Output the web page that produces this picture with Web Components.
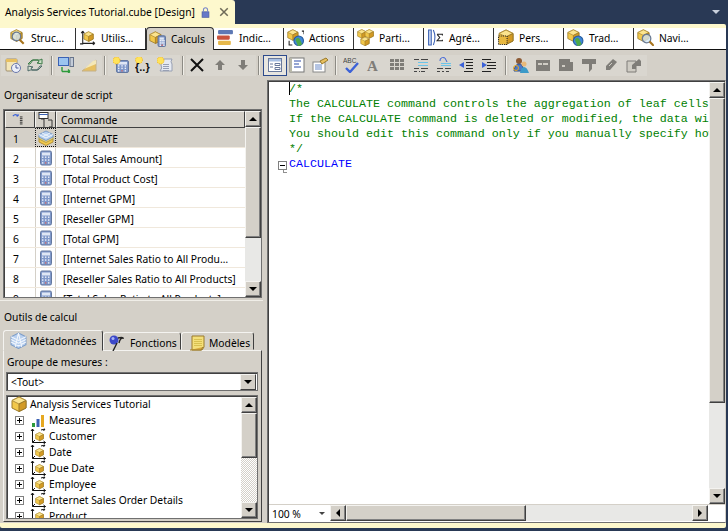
<!DOCTYPE html>
<html>
<head>
<meta charset="utf-8">
<title>Analysis Services Tutorial.cube [Design]</title>
<style>
html, body { margin: 0; height: 100%; overflow: hidden; background: #293955; }
body { font: 10.3px "Noto Sans", "Liberation Sans", sans-serif; color: #000; }
</style>
</head>
<body>
<cube-designer>
  <doc-tab slot="doc">Analysis Services Tutorial.cube [Design]</doc-tab>
  <design-tab slot="tabs" icon="struct">Struc…</design-tab>
  <design-tab slot="tabs" icon="utilis">Utilis…</design-tab>
  <design-tab slot="tabs" icon="calculs" active>Calculs</design-tab>
  <design-tab slot="tabs" icon="indic">Indic…</design-tab>
  <design-tab slot="tabs" icon="actions">Actions</design-tab>
  <design-tab slot="tabs" icon="parti">Parti…</design-tab>
  <design-tab slot="tabs" icon="agg">Agré…</design-tab>
  <design-tab slot="tabs" icon="pers">Pers…</design-tab>
  <design-tab slot="tabs" icon="trad">Trad…</design-tab>
  <design-tab slot="tabs" icon="navi" last>Navi…</design-tab>
  <calc-toolbar slot="toolbar"></calc-toolbar>
  <script-pane slot="left">
    <grid-row n="1" selected>CALCULATE</grid-row>
    <grid-row n="2">[Total Sales Amount]</grid-row>
    <grid-row n="3">[Total Product Cost]</grid-row>
    <grid-row n="4">[Internet GPM]</grid-row>
    <grid-row n="5">[Reseller GPM]</grid-row>
    <grid-row n="6">[Total GPM]</grid-row>
    <grid-row n="7">[Internet Sales Ratio to All Produ…</grid-row>
    <grid-row n="8">[Reseller Sales Ratio to All Products]</grid-row>
    <grid-row n="9">[Total Sales Ratio to All Products]</grid-row>
  </script-pane>
  <tools-pane slot="left">
    <tree-node root>Analysis Services Tutorial</tree-node>
    <tree-node icon="bars">Measures</tree-node>
    <tree-node>Customer</tree-node>
    <tree-node>Date</tree-node>
    <tree-node>Due Date</tree-node>
    <tree-node>Employee</tree-node>
    <tree-node>Internet Sales Order Details</tree-node>
    <tree-node>Product</tree-node>
  </tools-pane>
  <code-editor slot="editor"></code-editor>
</cube-designer>

<script>
// small pieces the icons are composed from, all in svg units
const cube = (x, y, s) => `<g transform="translate(${x} ${y}) scale(${s / 16})">
  <path d="M8 1 15 4.5V12L8 15.5 1 12V4.5Z" fill="#f2c84a" stroke="#9a7a2a"/>
  <path d="M1 4.5 8 8 15 4.5 8 1Z" fill="#fbe48e" stroke="#b4923c"/>
  <path d="M8 8V15.5L15 12V4.5Z" fill="#d39a24" stroke="#9a7a2a"/></g>`;
const calc = (x, y, w, h) => {
  let keys = '';
  for (let r = 0; r < 3; r++) for (let c = 0; c < 3; c++) {
    keys += `<rect x="${x + 2 + c * (w - 3) / 3}" y="${y + h * 0.4 + r * h * 0.19}" width="1.4" height="1.4" fill="${r == 2 && c == 1 ? '#d06a6a' : '#eef2fa'}"/>`;
  }
  return `<rect x="${x + .5}" y="${y + .5}" width="${w - 1}" height="${h - 1}" rx="1.5" fill="#8099ca" stroke="#64789f"/>
  <rect x="${x + 2}" y="${y + 2}" width="${w - 4}" height="${h * 0.2}" fill="#dfe7f5"/>${keys}`;
};
const globe = (x, y, r) => `<circle cx="${x}" cy="${y}" r="${r}" fill="#3f86d8" stroke="#255a9c"/>
  <path d="M${x - r * .7} ${y - r * .2}q${r * .6} ${-r * .8} ${r} 0t${r * .4} ${r}l${-r * .8} ${r * .4}z" fill="#4ea84a"/>`;
const mag = (x, y, r) => `<circle cx="${x}" cy="${y}" r="${r}" fill="#d6e8f6" fill-opacity=".8" stroke="#6a7a92" stroke-width="1.2"/>
  <path d="M${x + r * .7} ${y + r * .7}l4 4" stroke="#a8741c" stroke-width="2"/>`;
const spark = (x, y) => `<circle cx="${x}" cy="${y}" r="3.5" fill="#ffe35a" stroke="#f0b01c" stroke-dasharray="1 1"/>`;
const lines = (x, y, w, n, col, step = 2) => {
  let d = '';
  for (let i = 0; i < n; i++) d += `M${x} ${y + i * step + .5}h${w}`;
  return `<path d="${d}" stroke="${col}"/>`;
};
const gray = '#7f7d78';

const ICONS = {
  struct: cube(1, 0, 12) + mag(7, 7, 4),
  utilis: cube(4, 2, 10) + `<path d="M3.5 2V13.5H15M3.5 2 2 4M3.5 2 5 4M15 13.5 13 12M15 13.5 13 15M1 14h3" stroke="#222" fill="none"/>`,
  calculs: cube(0, 1, 12) + calc(8, 5, 8, 11),
  indic: `<rect x="1" y="1" width="14" height="4" rx="1" fill="#5d78b4"/><rect x="0" y="6" width="12" height="4" rx="1" fill="#c8523c"/><rect x="1" y="11" width="12" height="4" rx="1" fill="#e6b84a"/>`,
  actions: cube(0, 0, 11) + `<path d="M2 11v4h3M14 2h2v3" stroke="#222" fill="none"/>` + globe(11, 11, 4.5),
  parti: cube(0, 0, 9) + cube(7, 0, 9) + cube(3, 7, 9),
  agg: `<path d="M1.5 1H4V15H1.5Z" fill="#cfdcf4" stroke="#3c62b4"/><path d="M6 1q3 7 0 14" fill="none" stroke="#3c62b4"/><path d="M9.5 5h5v1M9.5 5l2.5 3-2.5 3h5v-1" fill="none" stroke="#222"/>`,
  pers: cube(1, 0, 15) + `<rect x="1.5" y="6.5" width="8" height="8" fill="#e8b840" stroke="#222" stroke-dasharray="1 1"/>`,
  trad: cube(0, 0, 12) + globe(10.5, 11, 4.5),
  navi: cube(0, 0, 12) + mag(9, 9, 4),
  cube: cube(0, 0, 16),
  calc: calc(2, 0.5, 12, 15),
  cubestack: `<path d="M1 9v3l7 3.5L15 12V9Z" fill="#f2c84a" stroke="#b4923c"/><path d="M1 6v3l7 3.5L15 9V6Z" fill="#e9d27a" stroke="#b4a04c"/><path d="M8 1 15 4.5V7L8 10.5 1 7V4.5Z" fill="#b8d0f0" stroke="#7c9cc8"/><path d="M1 4.5 8 8 15 4.5M4 3 11 6.5M12 3 5 6.5" fill="none" stroke="#eef4fc"/>`,
  meta: `<path d="M8 1 15 4.5V12L8 15.5 1 12V4.5Z" fill="#b8d0f0" stroke="#7c9cc8"/><path d="M1 4.5 8 8 15 4.5M1 7 8 10.5 15 7M1 9.5 8 13 15 9.5M8 1 11 14M8 1 5 14" fill="none" stroke="#f2f6fc"/>`,
  func: `<circle cx="6" cy="5" r="4.5" fill="#3c48c8"/><circle cx="5" cy="3.5" r="1.5" fill="#a8b4f4"/><path d="M9 8 5 16M10 3q4-1 5 0-3 0-4 5" stroke="#222" stroke-width="1.4" fill="none"/>`,
  tmpl: `<path d="M3 1H15V12L13 15H3Z" fill="#f4df7a" stroke="#9a7a2a"/><path d="M1 15H12L14 12" fill="#d8a83c" stroke="#9a7a2a"/>` + lines(5, 4, 8, 4, '#d8c050'),
  bars: `<rect x="2" y="11" width="3" height="4" fill="#2c9a3a"/><rect x="6.5" y="7" width="3" height="8" fill="#3c62b4"/><rect x="11" y="3" width="3" height="12" fill="#e6a820"/>`,
  dim: cube(5, 4, 9) + `<path d="M2.5 1V14.5H15.5M2.5 1 1 3M2.5 1 4 3M15.5 14.5 13.5 13M15.5 14.5 13.5 16M2.5 14.5 5 12M11 2 15 1M15 1 13.5 3" stroke="#111" fill="none"/>`,
  hdrOrder: `<path d="M1 3.5q3-3 6 0M7 3.5 5 3M7 3.5 7 1.5" stroke="#3c62d8" fill="none" stroke-width="1.4"/>` + lines(9, 4, 3, 5, '#222'),
  hdrType: `<rect x="1" y="0.5" width="9" height="6" fill="#fff" stroke="#333"/><path d="M1 2.5h9" stroke="#3c62b4"/><path d="M6 7V15M6 7H3M10 8h4v7h-3" stroke="#333" fill="none"/>`,
  // toolbar
  tNew: `<rect x="1" y="2" width="11" height="12" rx="1" fill="#f4e6b8" stroke="#a09070"/><rect x="1" y="2" width="11" height="3" fill="#e8c060"/><circle cx="11" cy="11" r="4.5" fill="#eceff9" stroke="#6a78ac"/><path d="M11 8v3h2.5" stroke="#4a5a9c" fill="none"/>`,
  tReload: `<path d="M3 7 6 3h5l1 2-2 1 5 1V2l-2 1H5L1 7Z" fill="#cfe2c8" stroke="#3c7a48"/><path d="M13 9l-3 4H5L4 11l2-1-5-1v5l2-1h8l4-4Z" fill="#d8e0d0" stroke="#4e6a68"/>`,
  tDeploy: `<rect x="0.5" y="0.5" width="10" height="8" fill="#9cc4f0" stroke="#3c62b4"/><rect x="12" y="0.5" width="3.5" height="9" fill="#c4ccd8" stroke="#68748a"/><path d="M4 14.5h8M12 14.5 10 12.5M12 14.5 10 16.5M4 10v4.5" stroke="#2c9a3a" stroke-width="1.4" fill="none"/>`,
  tBuild: `<path d="M1 14 15 3V14Z" fill="#e8c060" stroke="#c4b088"/><path d="M3 12 12 4l3-1v4Z" fill="#f4e8b8"/><path d="M1 3h9v3H6L1 10Z" fill="#d8d6d0"/>`,
  tNewCalc: calc(3, 3, 13, 13) + spark(3.5, 3.5),
  tNewSet: spark(4, 3) + `<text x="0" y="14" font-family="'Liberation Sans',sans-serif" font-weight="700" font-size="11" fill="#111">{..}</text>`,
  tNewScript: `<path d="M4 2H15Q13 5 15 7V14H3Q6 11 4 8Z" fill="#e6eaf2" stroke="#98a0b4"/>` + lines(6, 7, 6, 4, '#98a0b4') + spark(3.5, 3.5),
  tDel: `<path d="M2 2 14 14M14 2 2 14" stroke="#111" stroke-width="2"/>`,
  tUp: `<path d="M8 3 13 8H10V13H6V8H3Z" fill="${gray}"/>`,
  tDown: `<path d="M8 13 13 8H10V3H6V8H3Z" fill="${gray}"/>`,
  tForm: `<rect x="1.5" y="1.5" width="13" height="13" fill="#fff" stroke="#6a7a9c"/><rect x="2" y="2" width="12" height="2.5" fill="#a8c0e4"/><path d="M3 7h3M3 10h3M8 6.5h5v2H8zM8 10.5h5v2H8z" stroke="#6a7a9c" fill="none"/>`,
  tScript: `<rect x="1" y="1" width="14" height="14" fill="#fff" stroke="#777"/><path d="M1 1h2v14H1z" fill="#b8b8a8"/><path d="M5 4h7M5 7h5M5 10h7" stroke="#2c4ca8"/>`,
  tTpl: `<rect x="1" y="5" width="12" height="10" fill="#fff" stroke="#888"/><path d="M3 8h7M3 10h7M3 12h7" stroke="#6a8ac8"/><path d="M8 4 14 1l2 2-6 4z" fill="#e8c060" stroke="#9a7a2a"/>`,
  tSpell: `<text x="0" y="6" font-family="'Liberation Sans',sans-serif" font-size="6.5" fill="#444">ABC</text><path d="M3 11 7 15 15 6" stroke="#3c62d8" stroke-width="2.4" fill="none"/>`,
  tFont: `<text x="1" y="14" font-family="'Liberation Serif',serif" font-weight="700" font-size="15" fill="${gray}">A</text>`,
  tGrid: `<path d="M1 2h4v3H1zM6 2h4v3H6zM11 2h4v3h-4zM1 6h4v3H1zM6 6h4v3H6zM11 6h4v3h-4zM1 10h4v3H1zM6 10h4v3H6zM11 10h4v3h-4z" fill="${gray}"/>`,
  tAlign1: `<path d="M1 2.5h5M1 14.5h3M6 14.5h1M1 11.5h5" stroke="#444"/><path d="M5 5h10v1H5zM5 8h10v1H5z" fill="#6cc4e8"/><path d="M8 2.5h7M8 11.5h7M8 14.5h4" stroke="#444"/>`,
  tAlign2: `<path d="M1 14.5h3M6 14.5h2M1 11.5h6" stroke="#444"/><path d="M5 6h10v1H5zM5 8h10v1H5z" fill="#6cc4e8"/><path d="M9 11.5h6M10 14.5h3" stroke="#444"/><path d="M4 4a3 3 0 0 1 6-1l1 2" stroke="#3c62d8" fill="none"/>`,
  tOut: `<path d="M6 2.5h9M8 5.5h7M8 8.5h7M8 11.5h7M6 14.5h9" stroke="#222"/><path d="M1 8 6 5V11Z" fill="#3c62d8"/>`,
  tIn: `<path d="M1 2.5h9M6 5.5h9M6 8.5h9M6 11.5h9M1 14.5h9" stroke="#222"/><path d="M6 8 1 5V11Z" fill="#3c62d8"/>`,
  tUsers: `<circle cx="6" cy="4" r="3" fill="#8c5a34"/><path d="M1 14Q2 7 6 7T10 12V14Z" fill="#4c78c8" stroke="#2c4c8c"/><circle cx="11" cy="7" r="2.5" fill="#e8b878"/><path d="M7 16Q8 10 11 10T16 16Z" fill="#3c9ac8"/><circle cx="3" cy="11" r="2.5" fill="none" stroke="#e8a820"/>`,
  g1: `<path d="M1 3h14v11H1z" fill="${gray}"/><path d="M3 6h4v2H3zM8 6h5v2H8z" fill="#cfccc4"/>`,
  g2: `<path d="M1 2h11v3h3v9H1z" fill="${gray}"/><path d="M4 8h3v2H4z" fill="#cfccc4"/>`,
  g3: `<path d="M1 2h14v5h-4v5L8 15V7H1z" fill="${gray}"/>`,
  g4: `<path d="M3 9 10 2l4 3-7 8H3z" fill="${gray}"/><path d="M6 9l3-3" stroke="#cfccc4"/>`,
  g5: `<path d="M1 4h9v11H1z" fill="#cfccc4" stroke="${gray}"/><path d="M6 8 13 2l2 2v5H10v3H6z" fill="${gray}"/>`,
  lock: `<rect x="3" y="7" width="10" height="8" fill="#6678c8" stroke="#4a5aa0"/><path d="M5 7V4a3 3 0 0 1 6 0V7" fill="none" stroke="#7a88c8" stroke-width="1.6"/>`,
  close: `<path d="M3 3 13 13M13 3 3 13" stroke="#6e6a58" stroke-width="2"/>`,
};

class AppIcon extends HTMLElement {
  constructor() {
    super();
    const size = this.getAttribute('size') || 16;
    this.attachShadow({ mode: 'open' }).innerHTML = `
      <style>:host { display: inline-block; width: ${size}px; height: ${size}px; flex: none; line-height: 0; }</style>
      <svg width="${size}" height="${size}" viewBox="0 0 16 16">${ICONS[this.getAttribute('name')] || ''}</svg>`;
  }
}
customElements.define('app-icon', AppIcon);

const scrollTemplate = document.createElement('template');
scrollTemplate.innerHTML = `
<style>
:host { display: flex; flex: none; width: var(--sb, 16px); flex-direction: column; background: var(--track, #e8e8e6); box-sizing: border-box; }
:host([horizontal]) { flex-direction: row; width: auto; height: 16px; }
.btn, .thumb {
  flex: none; box-sizing: border-box; background: #d4d0c8;
  border: 1px solid; border-color: #f4f3f0 #404040 #404040 #f4f3f0; box-shadow: inset -1px -1px #808080;
}
.btn { width: var(--sb, 16px); height: 16px; display: flex; align-items: center; justify-content: center; }
.track { flex: 1; }
.up::after { content: ''; border: 4px solid transparent; border-top: 0; border-bottom-color: #000; }
.down::after { content: ''; border: 4px solid transparent; border-bottom: 0; border-top-color: #000; }
:host([horizontal]) .up::after { border: 4px solid transparent; border-left: 0; border-right-color: #000; }
:host([horizontal]) .down::after { border: 4px solid transparent; border-right: 0; border-left-color: #000; }
</style>
<div class="btn up"></div><div class="thumb"></div><div class="track"></div><div class="btn down"></div>`;

class ScrollBar extends HTMLElement {
  constructor() {
    super();
    this.attachShadow({ mode: 'open' }).appendChild(scrollTemplate.content.cloneNode(true));
    const size = this.getAttribute('thumb') + 'px';
    const thumb = this.shadowRoot.querySelector('.thumb');
    if (this.hasAttribute('horizontal')) thumb.style.width = size;
    else thumb.style.height = size;
  }
}
customElements.define('scroll-bar', ScrollBar);

const designerTemplate = document.createElement('template');
designerTemplate.innerHTML = `
<style>
:host { display: flex; flex-direction: column; height: 528px; width: 726px; }
.top { height: 24px; display: flex; position: relative; flex: none; }
.arrow { position: absolute; right: 6px; top: 10px; border: 4px solid transparent; border-bottom: 0; border-top: 4px solid #c8d0dc; }
.cream { height: 4px; background: #fdf8cd; border-top-right-radius: 2px; flex: none; }
.tabs { display: flex; height: 21px; background: #fff; border-bottom: 1px solid #111; padding-left: 6px; flex: none; }
.main { display: flex; flex: 1; min-height: 0; background: #d4d0c8; }
.left { width: 263px; flex: none; display: flex; flex-direction: column; }
.footer { height: 5px; background: #fdf8cd; flex: none; border-radius: 0 0 2px 2px; }
</style>
<div class="top"><slot name="doc"></slot><div class="arrow"></div></div>
<div class="cream"></div>
<div class="tabs"><slot name="tabs"></slot></div>
<slot name="toolbar"></slot>
<div class="main">
  <div class="left"><slot name="left"></slot></div>
  <slot name="editor"></slot>
</div>
<div class="footer"></div>`;
class CubeDesigner extends HTMLElement {
  constructor() {
    super();
    this.attachShadow({ mode: 'open' }).appendChild(designerTemplate.content.cloneNode(true));
  }
}
customElements.define('cube-designer', CubeDesigner);

class DocTab extends HTMLElement {
  constructor() {
    super();
    this.attachShadow({ mode: 'open' }).innerHTML = `
    <style>
    :host { display: flex; align-items: center; width: 235px; height: 24px; box-sizing: border-box; padding-left: 5px; background: #fdf8cd; border-top-right-radius: 3px; white-space: nowrap; }
    span { width: 195px; flex: none; }
    app-icon { margin-right: 7px; }
    </style>
    <span><slot></slot></span><app-icon name="lock" size="11"></app-icon><app-icon name="close" size="12"></app-icon>`;
  }
}
customElements.define('doc-tab', DocTab);

class DesignTab extends HTMLElement {
  constructor() {
    super();
    this.attachShadow({ mode: 'open' }).innerHTML = `
    <style>
    :host { display: flex; align-items: center; gap: 5px; width: 70px; height: 21px; box-sizing: border-box; padding: 0 0 2px 3px; border-right: 1px solid #333; white-space: nowrap; }
    :host([active]) { background: #d4d0c8; border: 1px solid #333; border-bottom: 0; border-radius: 4px 4px 0 0; height: 23px; margin: -1px 0 -1px 0; width: 68px; padding: 0 0 1px 2px; position: relative; }
    :host([last]) { border-right: 0; }
    </style>
    <app-icon name="${this.getAttribute('icon')}" size="17"></app-icon><span><slot></slot></span>`;
  }
}
customElements.define('design-tab', DesignTab);

// each group: start margin, end padding, then [icon, cell width, state]
const TOOL_GROUPS = [
  [0, 3, ['tNew', 23], ['tReload', 22]],
  [0, 1, ['tDeploy', 22], ['tBuild', 24]],
  [0, 2, ['tNewCalc', 26], ['tNewSet', 18], ['tNewScript', 26]],
  [0, 2, ['tDel', 22], ['tUp', 24], ['tDown', 22]],
  [1, 0, ['tForm', 24, 'on'], ['tScript', 20], ['tTpl', 26]],
  [0, 2, ['tSpell', 24], ['tFont', 22], ['tGrid', 24], ['tAlign1', 24], ['tAlign2', 22], ['tOut', 22], ['tIn', 24]],
  [0, 2, ['tUsers', 24], ['g1', 20], ['g2', 26], ['g3', 20], ['g4', 24], ['g5', 22]],
];
class CalcToolbar extends HTMLElement {
  constructor() {
    super();
    const groups = TOOL_GROUPS.map(([start, end, ...tools]) =>
      `<div class="group" style="margin-left:${start}px;padding-right:${end}px">${tools.map(([name, w, on]) =>
        `<div class="tool ${on || ''}" style="width:${w}px"><app-icon name="${name}"></app-icon></div>`).join('')}</div>`);
    this.attachShadow({ mode: 'open' }).innerHTML = `
    <style>
    :host { display: flex; height: 30px; flex: none; background: #d4d0c8; align-items: center; padding: 0 0 0 1px; box-sizing: border-box; }
    .group { display: flex; height: 21px; align-items: center; background: #d9d6cf; }
    .tool { display: flex; height: 21px; align-items: center; justify-content: center; box-sizing: border-box; }
    .on { border: 1px solid #2c4a8c; background: #e8e6e0; }
    i { display: block; width: 1px; height: 19px; background: #8c8a84; border-right: 1px solid #f0eee8; margin: 0 2px; }
    </style>${groups.join('<i></i>')}`;
  }
}
customElements.define('calc-toolbar', CalcToolbar);

class GridRow extends HTMLElement {
  constructor() {
    super();
    const sel = this.hasAttribute('selected');
    this.attachShadow({ mode: 'open' }).innerHTML = `
    <style>
    :host { display: flex; height: 20px; flex: none; align-items: center; background: #fff; box-sizing: border-box; border-bottom: 1px solid #f0e8dc; white-space: nowrap; }
    :host([selected]) { background: #d4d0c8; }
    .n { width: 30px; padding: 2px 0 0 8px; box-sizing: border-box; flex: none; }
    .i { width: 21px; height: 100%; display: flex; align-items: center; justify-content: center; flex: none; box-sizing: border-box; border-left: 1px solid #d4d0c8; border-right: 1px solid #d4d0c8; }
    :host([selected]) .i { border: 1px dotted #111; }
    .t { padding: 2px 0 0 7px; }
    </style>
    <div class="n">${this.getAttribute('n')}</div>
    <div class="i"><app-icon name="${sel ? 'cubestack' : 'calc'}"></app-icon></div>
    <div class="t"><slot></slot></div>`;
  }
}
customElements.define('grid-row', GridRow);

class ScriptPane extends HTMLElement {
  constructor() {
    super();
    this.attachShadow({ mode: 'open' }).innerHTML = `
    <style>
    :host { display: flex; flex-direction: column; height: 220px; flex: none; }
    .title { height: 29px; padding-left: 4px; display: flex; align-items: center; flex: none; }
    .frame { height: 189px; margin-left: 3px; margin-right: 1px; flex: none; display: flex; box-sizing: border-box; border: 1px solid #707070; box-shadow: inset 1px 1px #404040; padding: 1px 0 0 1px; background: #fff; overflow: hidden; }
    .col { flex: 1; min-width: 0; display: flex; flex-direction: column; overflow: hidden; }
    .head { display: flex; height: 17px; flex: none; }
    .head div { box-sizing: border-box; background: #d4d0c8; border: 1px solid; border-color: #f4f3f0 #404040 #404040 #f4f3f0; display: flex; align-items: center; }
    </style>
    <div class="title">Organisateur de script</div>
    <div class="frame">
      <div class="col">
        <div class="head">
          <div style="width:30px;padding-left:6px"><app-icon name="hdrOrder" size="14"></app-icon></div>
          <div style="width:21px;padding-left:2px"><app-icon name="hdrType" size="16"></app-icon></div>
          <div style="flex:1;padding-left:4px">Commande</div>
        </div>
        <slot></slot>
      </div>
      <scroll-bar thumb="111"></scroll-bar>
    </div>`;
  }
}
customElements.define('script-pane', ScriptPane);

class TreeNode extends HTMLElement {
  constructor() {
    super();
    const root = this.hasAttribute('root');
    this.attachShadow({ mode: 'open' }).innerHTML = `
    <style>
    :host { display: flex; height: 16px; flex: none; align-items: center; white-space: nowrap; }
    .box { width: 9px; height: 9px; box-sizing: border-box; border: 1px solid #808080; margin: 0 6px 0 6px; flex: none; position: relative; background: #fff; }
    .box::before { content: ''; position: absolute; left: 1px; right: 1px; top: 3px; height: 1px; background: #000; }
    .box::after { content: ''; position: absolute; top: 1px; bottom: 1px; left: 3px; width: 1px; background: #000; }
    app-icon { margin-right: 3px; }
    :host([root]) app-icon { margin: 0 3px 0 2px; }
    </style>
    ${root ? '' : '<div class="box"></div>'}
    <app-icon name="${root ? 'cube' : this.getAttribute('icon') || 'dim'}"></app-icon><slot></slot>`;
  }
}
customElements.define('tree-node', TreeNode);

class ToolsPane extends HTMLElement {
  constructor() {
    super();
    this.attachShadow({ mode: 'open' }).innerHTML = `
    <style>
    :host { display: flex; flex-direction: column; flex: 1; min-height: 0; }
    .title { height: 30px; padding: 3px 0 0 4px; display: flex; align-items: center; flex: none; border-top: 1px solid #f0eee8; box-sizing: border-box; }
    .tabs { display: flex; height: 20px; margin-left: 3px; flex: none; align-items: flex-end; position: relative; z-index: 1; }
    .tab { display: flex; align-items: center; box-sizing: border-box; height: 18px; padding-top: 3px; border: 1px solid; border-color: #f4f3f0 #404040 transparent #f4f3f0; border-radius: 3px 3px 0 0; white-space: nowrap; }
    .tab.on { height: 21px; margin-bottom: -1px; background: #d4d0c8; padding-top: 0; }
    .body { flex: 1; margin: 0 1px 1px 3px; border: 1px solid; border-color: #f4f3f0 #404040 #404040 #f4f3f0; display: flex; flex-direction: column; padding: 0 3px 2px 2px; min-height: 0; }
    .lab { height: 21px; padding: 1px 0 0 1px; box-sizing: border-box; display: flex; align-items: center; flex: none; }
    .select { height: 19px; flex: none; display: flex; box-sizing: border-box; background: #fff; border: 1px solid #707070; box-shadow: inset 1px 1px #404040; align-items: center; padding: 1px 1px 0 4px; justify-content: space-between; }
    .dd { width: 16px; height: 16px; box-sizing: border-box; background: #d4d0c8; border: 1px solid; border-color: #f4f3f0 #404040 #404040 #f4f3f0; display: flex; align-items: center; justify-content: center; }
    .dd::after { content: ''; border: 4px solid transparent; border-bottom: 0; border-top-color: #000; }
    .tree { flex: 1; margin-top: 4px; min-height: 0; display: flex; box-sizing: border-box; background: #fff; border: 1px solid #707070; box-shadow: inset 1px 1px #404040; padding: 0 0 0 2px; overflow: hidden; }
    .nodes { flex: 1; min-width: 0; overflow: hidden; display: flex; flex-direction: column; }
    scroll-bar { margin-top: 1px; --track: repeating-conic-gradient(#d4d0c8 0 25%, #fff 0 50%) 0 0 / 2px 2px; }
    </style>
    <div class="title">Outils de calcul</div>
    <div class="tabs">
      <div class="tab on" style="width:100px;padding-left:6px;gap:3px"><app-icon name="meta" size="17"></app-icon>Métadonnées</div>
      <div class="tab" style="width:78px;padding-left:4px;gap:6px"><app-icon name="func"></app-icon>Fonctions</div>
      <div class="tab" style="width:73px;padding-left:7px;gap:4px"><app-icon name="tmpl"></app-icon>Modèles</div>
    </div>
    <div class="body">
      <div class="lab">Groupe de mesures :</div>
      <div class="select"><span>&lt;Tout&gt;</span><div class="dd"></div></div>
      <div class="tree">
        <div class="nodes"><slot></slot></div>
        <scroll-bar thumb="45"></scroll-bar>
      </div>
    </div>`;
  }
}
customElements.define('tools-pane', ToolsPane);

class CodeEditor extends HTMLElement {
  constructor() {
    super();
    this.attachShadow({ mode: 'open' }).innerHTML = `
    <style>
    :host { display: flex; flex-direction: column; flex: 1; min-width: 0; margin-left: 4px; box-sizing: border-box; background: #fff; border: 1px solid #707070; border-right: 1px solid #d4d0c8; box-shadow: inset 1px 1px #404040; padding: 0 0 0 1px; }
    .top { flex: 1; display: flex; min-height: 0; }
    .margin { width: 20px; flex: none; position: relative; }
    .fold { position: absolute; left: 9px; top: 80px; width: 9px; height: 9px; box-sizing: border-box; border: 1px solid #808080; background: #fff; }
    .fold::after { content: ''; position: absolute; left: 1px; right: 1px; top: 3px; height: 1px; background: #000; }
    .fold::before { content: ''; position: absolute; left: 4px; top: 8px; width: 3px; height: 2px; border: solid #909090; border-width: 0 0 1px 1px; }
    pre { flex: 1; min-width: 0; margin: 0; padding-top: 1px; font: 11.67px/15px "Liberation Mono", monospace; color: #008000; overflow: hidden; position: relative; }
    pre span { color: #0000ff; }
    pre::before { content: ''; position: absolute; left: 0; top: 1px; width: 1px; height: 13px; background: #000; }
    .sb { align-self: stretch; margin-top: 1px; }
    .bottom { display: flex; height: 17px; flex: none; border-top: 1px solid #d4d0c8; }
    .zoom { width: 61px; flex: none; display: flex; align-items: center; padding-left: 3px; box-sizing: border-box; justify-content: space-between; }
    .zoom::after { content: ''; border: 3px solid transparent; border-bottom: 0; border-top-color: #444; margin-right: 5px; }
    .corner { width: 17px; flex: none; }
    .hsb { flex: 1; min-width: 0; }
    </style>
    <div class="top">
      <div class="margin"><div class="fold"></div></div>
      <pre>/*
The CALCULATE command controls the aggregation of leaf cells in the cube.
If the CALCULATE command is deleted or modified, the data within the cube is affected.
You should edit this command only if you manually specify how the cube is aggregated.
*/
<span>CALCULATE</span></pre>
      <scroll-bar class="sb" thumb="305"></scroll-bar>
    </div>
    <div class="bottom">
      <div class="zoom">100 %</div>
      <scroll-bar class="hsb" horizontal thumb="180"></scroll-bar>
      <div class="corner"></div>
    </div>`;
  }
}
customElements.define('code-editor', CodeEditor);
</script>
</body>
</html>
